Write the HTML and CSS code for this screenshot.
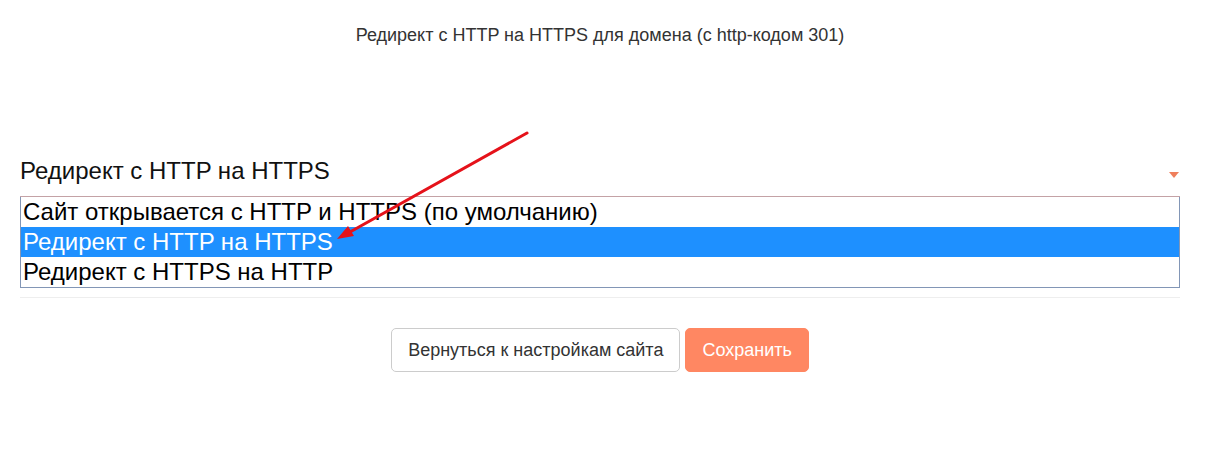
FILE: index.html
```html
<!DOCTYPE html>
<html>
<head>
    <title>Редирект с HTTP на HTTPS</title>
    <meta charset="utf-8">
    <link rel="stylesheet" href="styles.css">
</head>
<body>
    <div class="page">
        <!-- заголовок настройки -->
        <div class="setting-title">Редирект с HTTP на HTTPS для домена (с http-кодом 301)</div>

        <!-- выпадающий список -->
        <div class="select-box">
            <div class="select-current">
                <span>Редирект с HTTP на HTTPS</span>
                <span class="caret"></span>
            </div>
            <div class="select-list">
                <div class="option">Сайт открывается с HTTP и HTTPS (по умолчанию)</div>
                <div class="option selected">Редирект с HTTP на HTTPS</div>
                <div class="option">Редирект с HTTPS на HTTP</div>
            </div>
        </div>

        <div class="divider"></div>

        <!-- кнопки -->
        <div class="actions">
            <button class="btn btn-default">Вернуться к настройкам сайта</button>
            <button class="btn btn-save">Сохранить</button>
        </div>
    </div>

    <!-- стрелка-указатель -->
    <svg class="pointer" width="1214" height="449" viewBox="0 0 1214 449">
        <line x1="527" y1="133" x2="350" y2="232" stroke="#e5121a" stroke-width="3" stroke-linecap="round"/>
        <polygon points="337,239 348,226 354,236" fill="#e5121a"/>
    </svg>
</body>
</html>
```

FILE: styles.css
```css
body, html {
    margin: 0;
    padding: 0;
    background: #fff;
    font-family: 'Liberation Sans', Arial, sans-serif;
}

.page {
    width: 1160px;
    margin-left: 20px;
    padding-top: 24px;
}

.setting-title {
    text-align: center;
    color: #333;
    font-size: 18px;
    line-height: 22px;
}

.select-box {
    margin-top: 110px;
}

.select-current {
    display: flex;
    justify-content: space-between;
    align-items: center;
    font-size: 24px;
    color: #111;
    height: 30px;
    padding-bottom: 10px;
    border-bottom: 1px solid #c4a2a6;
}

.caret {
    width: 0;
    height: 0;
    border-left: 5px solid transparent;
    border-right: 5px solid transparent;
    border-top: 6px solid #ef7f5c;
    margin-right: 1px;
    margin-top: 8px;
}

.select-list {
    border: 1px solid #8296b6;
    border-top: none;
}

.option {
    height: 30px;
    line-height: 30px;
    font-size: 24px;
    padding-left: 2px;
    color: #000;
}

.option.selected {
    background: #1e90ff;
    color: #fff;
}

.divider {
    height: 1px;
    background: #eee;
    margin-top: 9px;
}

.actions {
    display: flex;
    justify-content: center;
    gap: 5px;
    margin-top: 30px;
}

.btn {
    font-family: 'Liberation Sans', Arial, sans-serif;
    font-size: 18px;
    height: 44px;
    padding: 0 16px;
    border-radius: 5px;
    cursor: pointer;
}

.btn-default {
    background: #fff;
    border: 1px solid #ccc;
    color: #333;
}

.btn-save {
    background: #ff8762;
    border: 1px solid #ff8762;
    color: #fff;
}

.pointer {
    position: absolute;
    left: 0;
    top: 0;
    pointer-events: none;
}
```
